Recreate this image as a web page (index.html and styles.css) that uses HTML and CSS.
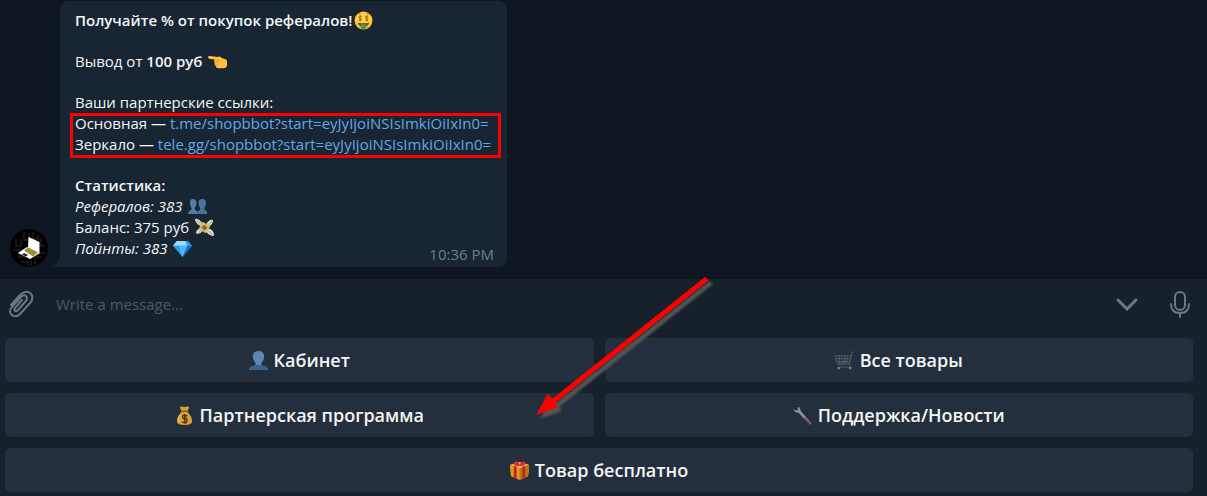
FILE: index.html
```html
<!DOCTYPE html>
<html lang="ru">
<head>
    <meta charset="UTF-8">
    <meta name="viewport" content="width=device-width, initial-scale=1.0">
    <title>Партнерская программа</title>
    <link rel="stylesheet" href="styles.css">
</head>
<body>
    <!-- Chat history -->
    <main class="chat">
        <svg class="avatar" viewBox="0 0 38 38" aria-hidden="true">
            <circle cx="19" cy="19" r="19" fill="#000"/>
            <path d="M6 10v7h5v-7M14 3v8h5V4M23 3v7h5V6M31 10v7h4M3 21h6v7h5M28 24h7M31 28h-6v7M11 33h7v4M21 32v5" fill="none" stroke="#1e1e1e" stroke-width="1.5"/>
            <path d="M18.500 8l11 5v11L18 18.500z" fill="#fff"/>
            <path d="M17 18l13 6-10 6-12-6z" fill="#fff"/>
            <path d="M18 18.500l10 5-5 4-9-6z" fill="#a58a2d"/>
            <path d="M14 24l4 2-2 1.500-4-2z" fill="#222"/>
        </svg>

        <article class="bubble">
            <svg class="tail" viewBox="0 0 8 12" aria-hidden="true"><path d="M8 0v12H0q7-3 8-12z"/></svg>
            <p><b>Получайте % от покупок рефералов!</b><svg class="emoji" viewBox="0 0 20 20" aria-hidden="true">
                <circle cx="10" cy="10" r="9.500" fill="#f9b934"/>
                <circle cx="10" cy="9" r="8" fill="#fdd045"/>
                <path d="M3 4q2-2 4-1.500M13 2.500q2 0 4 1.500" fill="none" stroke="#b5761c"/>
                <path d="M8 5.500q-3-.5-3 1t2 1.500 0 2l-2-.5M6.500 4.500v6.500M15 5.500q-3-.5-3 1t2 1.500 0 2l-2-.5M13.500 4.500v6.500" fill="none" stroke="#8d6a1c"/>
                <path d="M4 12q6 2 12 0-1 4.500-6 4.500T4 12z" fill="#7a3f17"/>
                <path d="M7 14h6v3q-1 2.500-3 2.500T7 17z" fill="#43a047"/>
            </svg></p>
            <p>Вывод от <b>100 руб</b> <svg class="emoji" viewBox="0 0 20 20" aria-hidden="true">
                <path d="M0 5.500Q0 4 2 4.300l8 1q2-1.500 4 .7l5 2q1 .5 1 2v5q-1 2-4 2h-5q-3 0-3-3-2-1-1-3-1-2 0-3L1 7z" fill="#fdc23a"/>
                <path d="M8 8.500l4 .5-2 2H7M7.500 14h4" fill="none" stroke="#e39a22"/>
            </svg></p>
            <div class="links">
                <p>Ваши партнерские ссылки:</p>
                <p>Основная — <a href="#main">t.me/shopbbot?start=eyJyIjoiNSIsImkiOiIxIn0=</a></p>
                <p>Зеркало — <a href="#mirror">tele.gg/shopbbot?start=eyJyIjoiNSIsImkiOiIxIn0=</a></p>
                <div class="highlight"></div>
            </div>
            <div class="stats">
                <div>
                    <p><b>Статистика:</b></p>
                    <p><i>Рефералов: 383</i> <svg class="emoji" viewBox="0 0 20 20" aria-hidden="true">
                        <path d="M5 2q4 0 4 4t-2 6q0 2 3 3v3H0q0-3 3-4l1-2Q2 9 2 6q0-4 3-4z" fill="#557da4"/>
                        <path d="M15 2q4 0 4 4 0 3-2 6l1 2q3 1 3 4H10v-3q3-1 3-3-2-2-2-6t4-4z" fill="#4b7298"/>
                    </svg></p>
                    <p>Баланс: 375 руб <svg class="emoji" viewBox="0 0 20 20" aria-hidden="true">
                        <path d="M8 6Q4 0 0 1q0 5 7 8zM12 6q3-5 7-4 0 5-5 7zM7 11q-6 0-6 5 4 2 8-3zM13 11q7 0 7 8-5 0-9-5z" fill="#d9d8c2"/>
                        <path d="M2 3l5 4M17 4l-3 3M4 15l4-3M18 17l-5-4" fill="none" stroke="#aaa994"/>
                        <path d="M8 4l8 5-5 7-7-5z" fill="#c9b878"/>
                        <path d="M10 7l3 3-3 3-3-3z" fill="#80682e"/>
                        <path d="M8 5l7 5" stroke="#f1b72e" stroke-width="1.500"/>
                    </svg></p>
                    <p><i>Пойнты: 383</i> <svg class="emoji" viewBox="0 0 20 20" aria-hidden="true">
                        <path d="M4 2h12l4 5-10 12L0 7z" fill="#2a9bed"/>
                        <path d="M4 2h4L6 7H0zM8 2h5l2 5H6z" fill="#9bdbff"/>
                        <path d="M6 7h9l-5 12z" fill="#52b9ff"/>
                        <path d="M15 7h5L10 19z" fill="#1470c8"/>
                    </svg></p>
                </div>
                <time>10:36 PM</time>
            </div>
        </article>
    </main>

    <!-- Message input -->
    <form class="composer">
        <button type="button" class="icon-btn" aria-label="Attach">
            <svg width="26" height="28" viewBox="0 0 26 28"><path d="M3 15L13 4q5-4 9-1t1 9L12 24q-4 4-8 1t0-8l9-10q3-3 5-1t0 5l-8 9q-2 2-3 1t0-3l7-8"/></svg>
        </button>
        <input type="text" placeholder="Write a message..." aria-label="Message">
        <button type="button" class="icon-btn" aria-label="Hide keyboard">
            <svg width="22" height="14" viewBox="0 0 22 14"><path class="thick" d="M2 3l9 9 9-9"/></svg>
        </button>
        <button type="button" class="icon-btn" aria-label="Record voice">
            <svg width="20" height="28" viewBox="0 0 20 28"><rect x="5" y="2" width="10" height="18" rx="5"/><path d="M1 14q0 9 9 9t9-9M10 23v4"/></svg>
        </button>
    </form>

    <!-- Bot keyboard -->
    <div class="keyboard">
        <button type="button"><svg class="emoji" viewBox="0 0 20 20" aria-hidden="true">
            <path d="M10 0q6 0 6 6 0 4-3 7v1q0 1 3 2 4 1 4 4H0q0-3 4-4 3-1 3-2v-1Q4 10 4 6q0-6 6-6z" fill="#5b88b3"/>
            <path d="M7 14q3 2 6 0 0 1 3 2 4 1 4 4H0q0-3 4-4 3-1 3-2z" fill="#3c638c"/>
        </svg>Кабинет</button>
        <button type="button"><svg class="emoji" viewBox="0 0 20 20" aria-hidden="true">
            <path d="M20 1h-2l-3 13H3M0 5h17l-2 7-13 1zM1 8h14M2 11h12M4 5l1 8M7 5l1 8M10 5v8M13 5l-1 7M15 14l2 3H3" fill="none" stroke="#535b65"/>
            <circle cx="4" cy="18" r="1.500" fill="#82736f"/>
            <circle cx="16" cy="18" r="1.500" fill="#82736f"/>
        </svg>Все товары</button>
        <button type="button"><svg class="emoji" viewBox="0 0 20 20" aria-hidden="true">
            <path d="M5 1q2-1 5 0 3-1 5 0l-2 5q5 5 5 10 0 4-8 4t-8-4Q2 11 7 6z" fill="#d9a038"/>
            <path d="M7 5.500h6" stroke="#8a5a22" stroke-width="1.500"/>
            <path d="M6 9q-4 6-1 8" fill="none" stroke="#f4ca62"/>
            <path d="M13 10.500q-5-2-5 .5t2.500 2 2 3-5 .5M10.200 8.500v10" fill="none" stroke="#50340f" stroke-width="1.500"/>
        </svg>Партнерская программа</button>
        <button type="button"><svg class="emoji" viewBox="0 0 20 20" aria-hidden="true">
            <path d="M0 3l3 2 2-1V1q3 0 3 4l6 7-2 2-6-7Q2 8 0 3z" fill="#8793a2"/>
            <path d="M12 12l7 7" stroke="#80545a" stroke-width="2.500"/>
            <path d="M11 10l6 6" stroke="#8793a2"/>
        </svg>Поддержка/Новости</button>
        <button type="button" class="wide"><svg class="emoji" viewBox="0 0 20 20" aria-hidden="true">
            <path d="M0 4l10 3 10-3v4l-1 8-9 4-9-4-1-8z" fill="#e09b1b"/>
            <path d="M10 7l10-3v4l-1 8-9 4z" fill="#bd7412"/>
            <path d="M0 4l10-3 10 3-10 4z" fill="#f0b83c"/>
            <path d="M4 5l3 1v13l-3-1zM13 6l3-1v13l-3 1z" fill="#c91f2b"/>
            <path d="M10 5Q3 6 4 1q5-2 6 3 2-5 6-3 1 5-6 4z" fill="#d92a38"/>
        </svg>Товар бесплатно</button>

        <svg class="arrow" width="180" height="148" viewBox="0 0 180 148" aria-hidden="true">
            <path d="M170 0l4 3L20 126l3 4-22 8 12-21 4 5z"/>
        </svg>
    </div>
</body>
</html>
```

FILE: styles.css
```css
* {
    margin: 0;
    padding: 0;
    box-sizing: border-box;
}

body {
    font-family: "Open Sans", "Noto Sans", sans-serif;
    font-size: 15px;
    line-height: 21px;
    color: #f5f5f5;
    background-color: #17212b;
}

button,
input {
    font: inherit;
    color: inherit;
    background: none;
    border: none;
}

b {
    font-weight: 600;
}

/* Chat history */
.chat {
    display: flex;
    align-items: flex-end;
    gap: 12px;
    padding: 1px 10px 12px;
    background-color: #0e1621;
}

.avatar {
    width: 38px;
    height: 38px;
}

.bubble {
    position: relative;
    display: flex;
    flex-direction: column;
    gap: 20px;
    width: 447px;
    padding: 9px 15px 8px;
    border-radius: 8px 8px 8px 0;
    background-color: #182533;
}

.tail {
    position: absolute;
    left: -8px;
    bottom: 0;
    width: 8px;
    height: 12px;
    fill: #182533;
}

.bubble a {
    color: #62a8e6;
    text-decoration: none;
}

.emoji {
    width: 19px;
    height: 19px;
    vertical-align: -4px;
}

.bubble .emoji {
    margin-left: 2px;
}

/* Red frame around the referral links */
.links {
    position: relative;
    white-space: nowrap;
}

.highlight {
    position: absolute;
    left: -5px;
    right: -9px;
    bottom: -3px;
    height: 45px;
    border: 3px solid #f00;
}

.stats {
    display: flex;
    justify-content: space-between;
    align-items: flex-end;
}

.stats time {
    margin: 0 -2px -6px 0;
    color: #6d7f8f;
}

/* Message input */
.composer {
    display: flex;
    align-items: center;
    height: 54px;
    padding: 0 17px 4px 8px;
}

.composer input {
    flex: 1;
    padding: 0 22px;
    outline: none;
}

.composer input::placeholder {
    color: #4c5966;
    opacity: 1;
}

.icon-btn {
    display: flex;
    cursor: pointer;
}

.icon-btn + .icon-btn {
    margin-left: 32px;
}

.icon-btn svg {
    fill: none;
    stroke: #6c7883;
    stroke-width: 2;
    stroke-linecap: round;
}

.icon-btn .thick {
    stroke-width: 3;
}

/* Bot keyboard */
.keyboard {
    position: relative;
    display: grid;
    grid-template-columns: 1fr 1fr;
    gap: 11px;
    padding: 5px 14px 2px 5px;
}

.keyboard button {
    display: flex;
    justify-content: center;
    align-items: center;
    gap: 6px;
    height: 44px;
    border-radius: 5px;
    font-size: 18px;
    font-weight: 600;
    background-color: #242f3d;
    cursor: pointer;
}

.keyboard button:hover {
    background-color: #2b3848;
}

.keyboard .wide {
    grid-column: 1 / -1;
}

/* Arrow pointing at the partner program button */
.arrow {
    position: absolute;
    top: -56px;
    left: 535px;
    fill: #f00;
    filter: drop-shadow(4px 4px 1px #555);
    pointer-events: none;
    overflow: visible;
}
```
